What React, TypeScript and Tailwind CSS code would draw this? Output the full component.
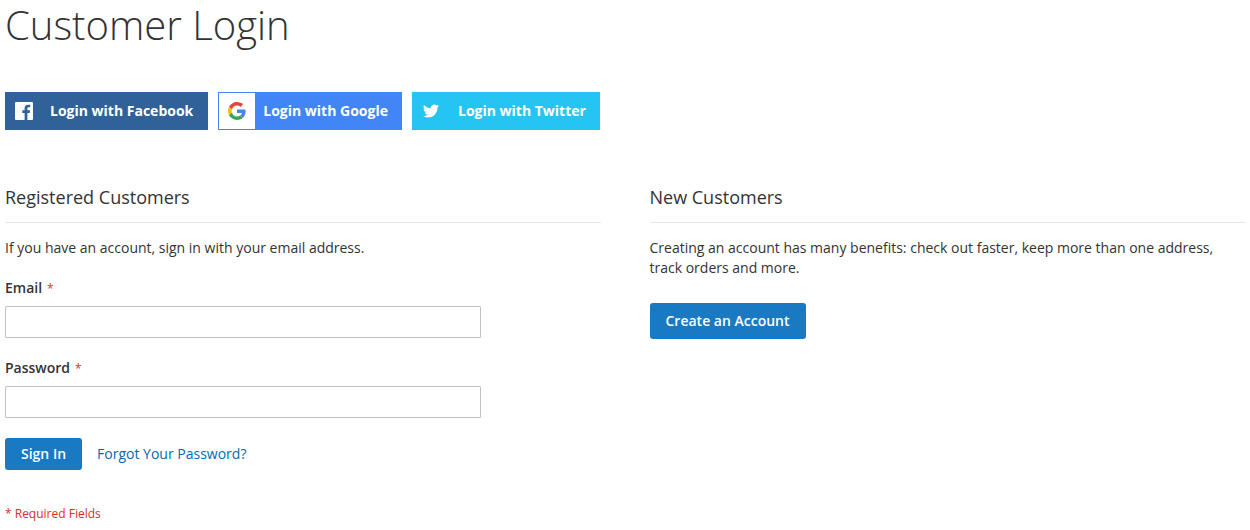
import type { ReactNode } from "react";

function Field({ id, label, type }: { id: string; label: string; type: string }) {
  return (
    <div className="mb-5 w-4/5">
      <label htmlFor={id} className="mb-2 block leading-5 font-semibold">
        {label}
        <span className="ml-[5px] text-xs font-normal text-[#e02b27]">*</span>
      </label>
      <input id={id} type={type} className="block h-8 w-full rounded-[1px] border border-[#c2c2c2] bg-white px-2" />
    </div>
  );
}

function Block({ title, children }: { title: string; children: ReactNode }) {
  return (
    <section>
      <h2 className="mb-[15px] border-b border-[#e8e8e8] pb-[15px] text-lg leading-5">{title}</h2>
      {children}
    </section>
  );
}

function FacebookIcon() {
  return (
    <svg viewBox="0 0 18 18" className="size-[18px]" fill="#fff" aria-hidden="true">
      <path d="M17 0H1a1 1 0 0 0-1 1v16a1 1 0 0 0 1 1h8.6v-7H7.300V8.300h2.300v-2c0-2.300 1.400-3.600 3.500-3.600 1 0 1.800.1 2.100.1v2.400h-1.400c-1.200 0-1.400.5-1.400 1.300v1.800h2.700l-.4 2.700h-2.300v7H17a1 1 0 0 0 1-1V1a1 1 0 0 0-1-1z" />
    </svg>
  );
}

function GoogleIcon() {
  return (
    <svg viewBox="0 0 48 48" className="size-[18px]" aria-hidden="true">
      <path fill="#EA4335" d="M24 9.500c3.540 0 6.710 1.220 9.210 3.600l6.850-6.850C35.900 2.380 30.470 0 24 0 14.620 0 6.510 5.380 2.560 13.220l7.980 6.190C12.430 13.720 17.740 9.500 24 9.500z" />
      <path fill="#4285F4" d="M46.980 24.550c0-1.570-.15-3.090-.38-4.550H24v9.020h12.940c-.58 2.960-2.260 5.480-4.780 7.180l7.730 6c4.510-4.180 7.090-10.360 7.090-17.650z" />
      <path fill="#FBBC05" d="M10.530 28.590c-.48-1.450-.76-2.990-.76-4.590s.27-3.140.76-4.590l-7.980-6.190C.92 16.460 0 20.120 0 24c0 3.880.92 7.540 2.560 10.780l7.970-6.190z" />
      <path fill="#34A853" d="M24 48c6.480 0 11.930-2.130 15.890-5.810l-7.730-6c-2.150 1.450-4.920 2.300-8.160 2.300-6.260 0-11.570-4.220-13.470-9.910l-7.980 6.190C6.510 42.620 14.620 48 24 48z" />
    </svg>
  );
}

function TwitterIcon() {
  return (
    <svg viewBox="0 0 24 24" className="size-4" fill="#fff" aria-hidden="true">
      <path d="M23.950 4.570a10 10 0 0 1-2.820.77 4.960 4.960 0 0 0 2.160-2.720c-.95.56-2 .96-3.130 1.180a4.920 4.920 0 0 0-8.380 4.480C7.690 8.100 4.070 6.130 1.640 3.160a4.920 4.920 0 0 0 1.520 6.570 4.900 4.900 0 0 1-2.230-.61v.06c0 2.380 1.700 4.370 3.950 4.830a5 5 0 0 1-2.210.08 4.940 4.940 0 0 0 4.600 3.420A9.870 9.870 0 0 1 0 19.540a13.990 13.990 0 0 0 7.550 2.210c9.050 0 14-7.500 14-13.980 0-.21 0-.42-.02-.63a9.940 9.940 0 0 0 2.420-2.570z" />
    </svg>
  );
}

export default function App() {
  return (
    <main className="bg-white px-[5px] pt-[3px] pb-2 font-['Open_Sans',sans-serif] text-sm leading-5 text-[#333]">
      <h1 className="mb-[45px] text-[40px] leading-[44px] font-light">Customer Login</h1>
      <div className="mb-[57px] flex flex-wrap gap-2.5 leading-5 font-bold text-white">
        <button type="button" className="flex h-[38px] items-center bg-[#306199] pr-[15px] pl-2.5">
          <FacebookIcon />
          <span className="ml-[17px]">Login with Facebook</span>
        </button>
        <button type="button" className="flex h-[38px] items-center border border-[#4285f4] bg-[#4285f4] pr-[13px]">
          <span className="flex h-full w-9 items-center justify-center bg-white">
            <GoogleIcon />
          </span>
          <span className="ml-2">Login with Google</span>
        </button>
        <button type="button" className="flex h-[38px] items-center bg-[#26c4f1] pr-[14px] pl-[11px]">
          <TwitterIcon />
          <span className="ml-[19px]">Login with Twitter</span>
        </button>
      </div>
      <div className="grid grid-cols-2 gap-[49px]">
        <Block title="Registered Customers">
          <form onSubmit={(event) => event.preventDefault()}>
            <p className="mb-5">If you have an account, sign in with your email address.</p>
            <Field id="email" label="Email" type="email" />
            <Field id="password" label="Password" type="password" />
            <div className="mb-[34px] flex items-center gap-[15px]">
              <button type="submit" className="h-8 rounded-[3px] bg-[#1979c3] px-4 font-semibold text-white">Sign In</button>
              <a href="#forgot" className="text-[#006bb4]">Forgot Your Password?</a>
            </div>
            <p className="text-xs leading-5 text-[#e02b27]">* Required Fields</p>
          </form>
        </Block>
        <Block title="New Customers">
          <p className="mb-[25px]">Creating an account has many benefits: check out faster, keep more than one address, track orders and more.</p>
          <a href="#create" className="inline-block rounded-[3px] bg-[#1979c3] px-4 py-2 font-semibold text-white">Create an Account</a>
        </Block>
      </div>
    </main>
  );
}
